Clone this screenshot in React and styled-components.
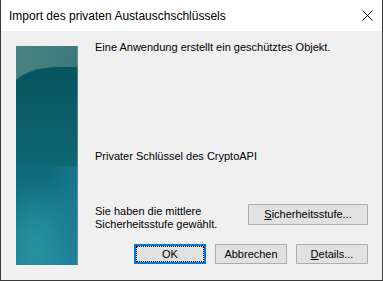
import React from "react";
import styled, { createGlobalStyle } from "styled-components";

const GlobalStyle = createGlobalStyle`
  html, body { margin: 0; padding: 0; background: #ffffff; }
  * { box-sizing: border-box; }
`;

const Window = styled.div`
  width: 383px;
  height: 281px;
  display: flex;
  flex-direction: column;
  border: 1px solid #3a3a3a;
  border-top: none;
  background: #f0f0f0;
  font-family: "Liberation Sans", Arial, sans-serif;
  color: #000;
`;

const TitleBar = styled.div`
  height: 31px;
  flex-shrink: 0;
  background: #ffffff;
  display: flex;
  align-items: center;
  justify-content: space-between;
  padding: 0 9px 0 8px;
`;

const Title = styled.div`
  font-size: 12px;
  line-height: 16px;
  color: #000;
`;

const CloseButton = styled.div`
  width: 12px;
  height: 12px;
  display: flex;
  align-items: center;
  justify-content: center;
  margin-right: 0;
`;

const Body = styled.div`
  flex: 1;
  display: flex;
  padding: 15px 14px 0 15px;
`;

const Art = styled.div`
  width: 62px;
  height: 219px;
  flex-shrink: 0;
  svg { display: block; }
`;

const Content = styled.div`
  flex: 1;
  display: flex;
  flex-direction: column;
  margin-left: 17px;
  margin-top: -5px;
  font-size: 11px;
  line-height: 13px;
`;

const Line = styled.div`
  margin-top: ${(p) => p.$gap || 0}px;
  white-space: nowrap;
`;

const Row = styled.div`
  display: flex;
  justify-content: ${(p) => p.$justify || "space-between"};
  align-items: flex-start;
  gap: ${(p) => p.$spacing || 0}px;
  margin-top: ${(p) => p.$gap || 0}px;
`;

const Note = styled.div`
  margin-top: 1px;
  white-space: nowrap;
`;

const Button = styled.button`
  position: relative;
  width: ${(p) => p.$width || 72}px;
  height: ${(p) => p.$height || 20}px;
  padding: 0;
  background: #e1e1e1;
  border: ${(p) => (p.$default ? "2px solid #0078d7" : "1px solid #adadad")};
  font-family: "Liberation Sans", Arial, sans-serif;
  font-size: 11px;
  line-height: 13px;
  color: #000;
  display: flex;
  align-items: center;
  justify-content: center;
  ${(p) =>
    p.$default &&
    `
    &::after {
      content: "";
      position: absolute;
      inset: 0;
      border: 1px dotted #000;
    }
  `}
`;

const Key = styled.span`
  text-decoration: underline;
  text-underline-offset: 1px;
`;

function ArtPanel() {
  return (
    <svg width="62" height="219" viewBox="0 0 62 219">
      <defs>
        <linearGradient id="topBand" x1="0" y1="0" x2="1" y2="1">
          <stop offset="0" stopColor="#4a8482" />
          <stop offset="1" stopColor="#2f6e70" />
        </linearGradient>
        <linearGradient id="main" x1="0" y1="0" x2="0" y2="1">
          <stop offset="0" stopColor="#07545d" />
          <stop offset="0.45" stopColor="#0d6572" />
          <stop offset="0.75" stopColor="#177a8a" />
          <stop offset="1" stopColor="#1f8396" />
        </linearGradient>
        <radialGradient id="glow" cx="0.35" cy="0.85" r="0.6">
          <stop offset="0" stopColor="#2a97a3" stopOpacity="0.8" />
          <stop offset="1" stopColor="#2a97a3" stopOpacity="0" />
        </radialGradient>
        <linearGradient id="rightTint" x1="0" y1="0" x2="1" y2="0">
          <stop offset="0" stopColor="#1f7fa2" stopOpacity="0" />
          <stop offset="1" stopColor="#1f7fa2" stopOpacity="0.5" />
        </linearGradient>
      </defs>
      <rect x="0" y="0" width="62" height="219" fill="url(#topBand)" />
      <path d="M0 34 Q14 22 40 21 L62 21 L62 219 L0 219 Z" fill="url(#main)" />
      <rect x="0" y="110" width="62" height="109" fill="url(#glow)" />
      <rect x="30" y="120" width="31" height="99" fill="url(#rightTint)" />
      <rect x="61" y="0" width="1" height="219" fill="#6fa6b0" opacity="0.6" />
    </svg>
  );
}

export default function App() {
  return (
    <>
      <GlobalStyle />
      <Window>
        <TitleBar>
          <Title>Import des privaten Austauschschlüssels</Title>
          <CloseButton>
            <svg width="11" height="11" viewBox="0 0 11 11">
              <path d="M0.5 0.5 L10.5 10.5 M10.5 0.5 L0.5 10.5" stroke="#000" strokeWidth="1" fill="none" />
            </svg>
          </CloseButton>
        </TitleBar>
        <Body>
          <Art>
            <ArtPanel />
          </Art>
          <Content>
            <Line>Eine Anwendung erstellt ein geschütztes Objekt.</Line>
            <Line $gap={96}>Privater Schlüssel des CryptoAPI</Line>
            <Row $gap={41}>
              <Note>
                Sie haben die mittlere
                <br />
                Sicherheitsstufe gewählt.
              </Note>
              <Button $width={120} $height={21}>
                <span>
                  <Key>S</Key>icherheitsstufe...
                </span>
              </Button>
            </Row>
            <Row $gap={13} $justify="flex-end" $spacing={9}>
              <Button $default>OK</Button>
              <Button>Abbrechen</Button>
              <Button>
                <span>
                  <Key>D</Key>etails...
                </span>
              </Button>
            </Row>
          </Content>
        </Body>
      </Window>
    </>
  );
}
